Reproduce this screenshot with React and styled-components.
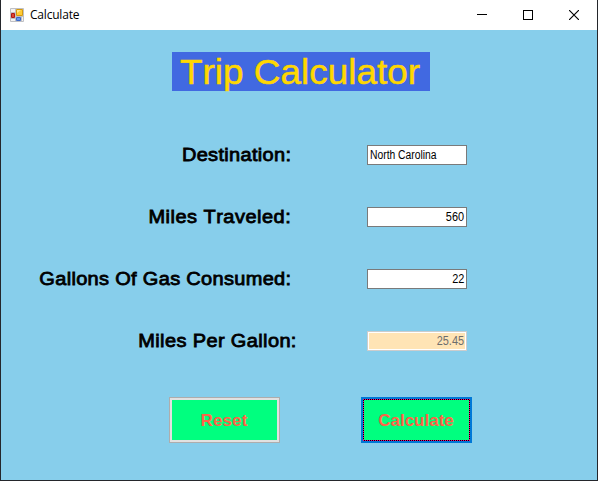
import React from "react";
import styled, { createGlobalStyle, css } from "styled-components";

const GlobalStyle = createGlobalStyle`
  *, *::before, *::after { box-sizing: border-box; }
  body { margin: 0; font-family: "Liberation Sans", Arial, sans-serif; font-kerning: none; }
`;

const Window = styled.main`
  width: 598px;
  height: 481px;
  display: flex;
  flex-direction: column;
  background: #87ceeb;
  border: 1px solid #24262b;
  border-top: 0;
  overflow: hidden;
`;

const TitleBar = styled.header`
  height: 30px;
  flex: none;
  display: flex;
  align-items: center;
  padding-left: 9px;
  background: #fff;
`;

const Caption = styled.span`
  flex: 1;
  margin-left: 6px;
  font: 12px/16px "Open Sans", "Noto Sans", sans-serif;
  letter-spacing: -0.2px;
  color: #000;
`;

const WindowControl = styled.span`
  width: 46px;
  height: 28px;
  display: flex;
  align-items: center;
  justify-content: center;
`;

const Body = styled.section`
  flex: 1;
  display: flex;
  flex-direction: column;
  padding-top: 22px;
`;

const Heading = styled.h1`
  width: 258px;
  height: 39px;
  margin: 0 0 0 171px;
  padding-left: 8px;
  background: #4169e1;
  color: #ffd700;
  font-size: 35px;
  font-weight: 400;
  line-height: 40px;
  white-space: nowrap;
  -webkit-text-stroke: 0.5px #ffd700;
`;

const HeadingText = styled.span`
  display: inline-block;
  transform: scaleX(1.055);
  transform-origin: left;
`;

const Form = styled.div`
  display: grid;
  grid-template-columns: 296px 100px;
  grid-auto-rows: 20px;
  row-gap: 42px;
  column-gap: 70px;
  margin-top: 54px;
`;

const Label = styled.label`
  justify-self: end;
  margin-right: ${({ $inset }) => $inset}px;
  font-size: 18.5px;
  line-height: 20px;
  letter-spacing: ${({ $tracking }) => $tracking}px;
  white-space: nowrap;
  color: #000;
  -webkit-text-stroke: 0.8px #000;
  transform: scaleX(1.08);
  transform-origin: right;
`;

const Field = styled.div`
  display: flex;
  justify-content: ${({ $numeric }) => ($numeric ? "flex-end" : "flex-start")};
  padding: 0 2px;
  border: 1px solid #7a7a7a;
  background: #fff;
  color: #000;
  font-size: 12px;
  line-height: 18px;
  ${({ $disabled }) =>
    $disabled &&
    css`
      border-color: #ccc;
      background: #ffe4b5;
      box-shadow: inset 0 0 0 1px #fff;
      color: #6d6d6d;
    `}
`;

const Value = styled.span`
  white-space: nowrap;
  transform: scaleX(${({ $numeric }) => ($numeric ? 0.91 : 0.86)});
  transform-origin: ${({ $numeric }) => ($numeric ? "right" : "left")};
`;

const Actions = styled.div`
  display: flex;
  gap: 81px;
  margin: 46px 0 0 168px;
`;

const Button = styled.button`
  width: 111px;
  height: 46px;
  padding: 1px 1px 0 0;
  border: 1px solid #adadad;
  background: #00ff7f;
  box-shadow: inset 0 0 0 2px #e1e1e1;
  color: #ff6347;
  font: 700 17px/20px "Liberation Sans", Arial, sans-serif;
  letter-spacing: ${({ $tracking }) => $tracking}px;
  ${({ $focused }) =>
    $focused &&
    css`
      border: 2px solid #0078d7;
      box-shadow: none;
      background:
        repeating-linear-gradient(90deg, #ff0080 0 1px, #000 1px 2px) top / 100% 1px no-repeat,
        repeating-linear-gradient(90deg, #ff0080 0 1px, #000 1px 2px) bottom / 100% 1px no-repeat,
        repeating-linear-gradient(#ff0080 0 1px, #000 1px 2px) left / 1px 100% no-repeat,
        repeating-linear-gradient(#ff0080 0 1px, #000 1px 2px) right / 1px 100% no-repeat,
        #00ff7f;
      background-origin: padding-box;
    `}
`;

const AppIcon = () => (
  <svg width="14" height="14" viewBox="0 0 14 14">
    <path d="M.5 .5h13v13H.5z" fill="#f2f2f2" stroke="#bfc0c4" />
    <path d="M5.5 0v14M0 4.5h6M6 8.5h8M0 10.5h6M11.5 9v5" stroke="#bfc0c4" />
    <path d="M6.5 1.5h6v6h-6z" fill="#ffcb34" stroke="#d49a10" />
    <path d="M7 2h4L7 5z" fill="#ffe88c" />
    <path d="M1.5 5.5h3v4h-3z" fill="#dc4630" stroke="#ad1818" />
    <path d="M6.5 9.5h4v3h-4z" fill="#6798ea" stroke="#3c69c8" />
  </svg>
);

const MinimizeIcon = () => (
  <svg width="10" height="10" shapeRendering="crispEdges">
    <path d="M0 4.5h10" stroke="#000" />
  </svg>
);

const MaximizeIcon = () => (
  <svg width="10" height="10" shapeRendering="crispEdges">
    <path d="M.5 .5h9v9h-9z" fill="none" stroke="#000" />
  </svg>
);

const CloseIcon = () => (
  <svg width="10" height="10">
    <path d="M0 0l10 10M10 0L0 10" stroke="#000" strokeWidth="1.15" />
  </svg>
);

const rows = [
  { label: "Destination:", value: "North Carolina", inset: 6, tracking: 0.3 },
  { label: "Miles Traveled:", value: "560", inset: 6, tracking: 0.45, numeric: true },
  { label: "Gallons Of Gas Consumed:", value: "22", inset: 6, tracking: 0.3, numeric: true },
  { label: "Miles Per Gallon:", value: "25.45", inset: 0, tracking: 0.35, numeric: true, disabled: true },
];

export default function App() {
  return (
    <>
      <GlobalStyle />
      <Window>
        <TitleBar>
          <AppIcon />
          <Caption>Calculate</Caption>
          <WindowControl><MinimizeIcon /></WindowControl>
          <WindowControl><MaximizeIcon /></WindowControl>
          <WindowControl><CloseIcon /></WindowControl>
        </TitleBar>
        <Body>
          <Heading><HeadingText>Trip Calculator</HeadingText></Heading>
          <Form>
            {rows.map((row) => (
              <React.Fragment key={row.label}>
                <Label $inset={row.inset} $tracking={row.tracking}>{row.label}</Label>
                <Field $numeric={row.numeric} $disabled={row.disabled}>
                  <Value $numeric={row.numeric}>{row.value}</Value>
                </Field>
              </React.Fragment>
            ))}
          </Form>
          <Actions>
            <Button $tracking={0.1}>Reset</Button>
            <Button $focused $tracking={0}>Calculate</Button>
          </Actions>
        </Body>
      </Window>
    </>
  );
}
